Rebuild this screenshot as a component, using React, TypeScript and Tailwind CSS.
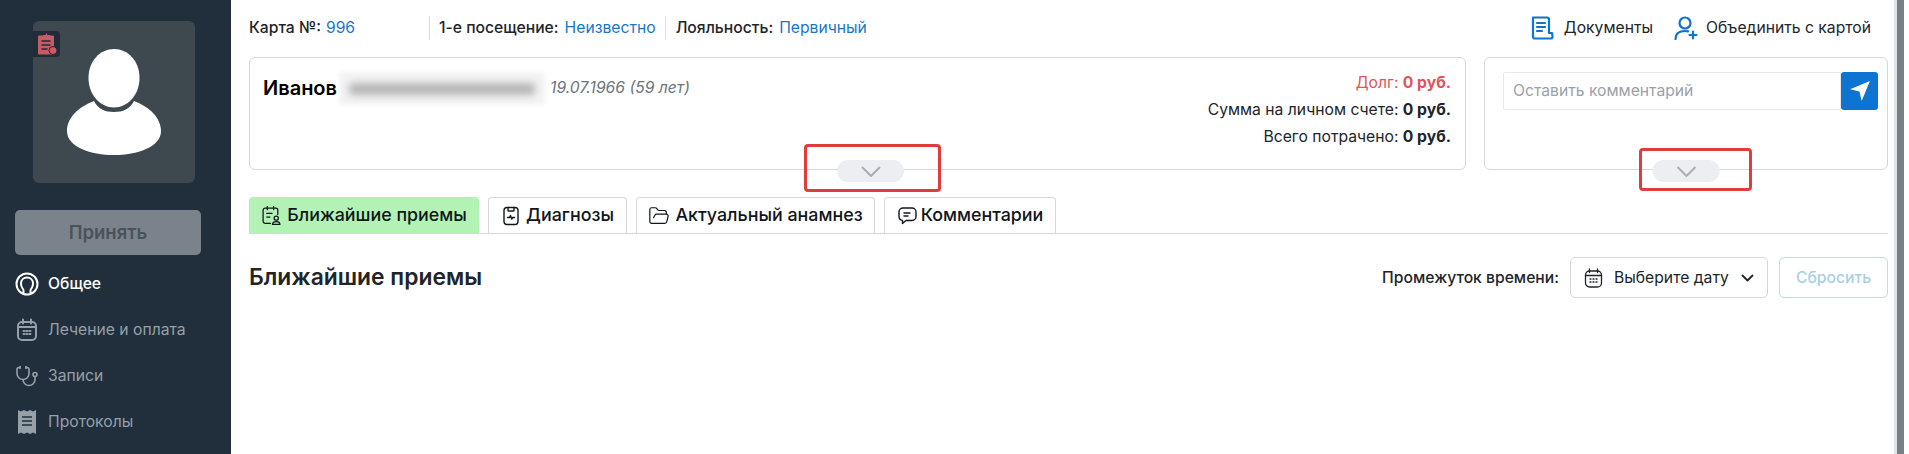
import { FolderOpen, Stethoscope } from 'lucide-react';

function AppointmentsIcon() {
  return (
    <svg width="21" height="21" viewBox="0 0 20 20" fill="none" stroke="currentColor" strokeWidth="1.200" strokeLinecap="round">
      <path d="M9 17.500H4a2 2 0 0 1-2-2V5a2 2 0 0 1 2-2h10a2 2 0 0 1 2 2v4" />
      <path d="M6 1.500v3M12 1.500v3M5.500 8h5M5.500 11.500h3" />
      <circle cx="14.500" cy="12.500" r="2" />
      <path d="M11 18.500c0-1.800 1.500-2.700 3.500-2.700s3.500.9 3.500 2.700z" />
    </svg>
  );
}

function DiagnosisIcon() {
  return (
    <svg width="20" height="20" viewBox="0 0 20 20" fill="none" stroke="currentColor" strokeWidth="1.400" strokeLinecap="round" strokeLinejoin="round">
      <rect x="3" y="1.500" width="14" height="17" rx="3" />
      <path d="M7 1.500v2.700c0 .5.400.8.800.8h4.400c.4 0 .8-.3.800-.8V1.500" />
      <path d="M6.500 11.500h2l1-2 1.200 3.500 1-1.500h1.800" />
    </svg>
  );
}

function CommentIcon() {
  return (
    <svg width="20" height="20" viewBox="0 0 20 20" fill="none" stroke="currentColor" strokeWidth="1.400" strokeLinecap="round" strokeLinejoin="round">
      <path d="M6 2h9a4 4 0 0 1 4 4v4.500a4 4 0 0 1-4 4H9l-3.500 3v-3.100A4 4 0 0 1 2 10.500V6a4 4 0 0 1 4-4z" />
      <path d="M7 7h6M7 10h4" />
    </svg>
  );
}

function AvatarFigure() {
  return (
    <svg width="94" height="106" viewBox="0 0 94 106" fill="white">
      <path d="M47 0c14 0 25.500 12 25.500 29 0 17-12 29.500-25.500 29.500S21.500 46 21.500 29C21.500 12 33 0 47 0z" />
      <path d="M27 52c4 8 11 11 20 11s16-3 20-11c16 6 27 17 27 30 0 16-24 24-47 24S0 98 0 82C0 69 11 58 27 52z" />
    </svg>
  );
}

function GeneralIcon() {
  return (
    <svg width="24" height="24" viewBox="0 0 24 24" fill="none" stroke="white" strokeWidth="2">
      <circle cx="12" cy="12" r="10.500" />
      <path d="M8.500 21v-2.500c0-1-.6-1.600-1.200-2.500C6.400 14.600 6 13 6 11.500 6 8 8.600 5.500 12 5.500s6 2.500 6 6c0 1.500-.4 3.100-1.300 4.500-.6.900-1.200 1.500-1.200 2.500V21" />
    </svg>
  );
}

function TreatmentIcon() {
  return (
    <svg width="24" height="24" viewBox="0 0 24 24" fill="none" stroke="#95a0a9" strokeWidth="2" strokeLinecap="round">
      <rect x="3" y="4" width="18" height="18" rx="4" />
      <path d="M8 1.500v4M16 1.500v4M3 9h18" />
      <path d="M8.500 13h1M11.500 13h1M14.500 13h1M8.500 16h1M11.500 16h1M14.500 16h1" />
    </svg>
  );
}

function ProtocolsIcon() {
  return (
    <svg width="20" height="24" viewBox="0 0 20 24" fill="#95a0a9">
      <path d="M1 0l3 1.500L7 0l3 1.500L13 0l3 1.500L19 0v24l-3-1.500-3 1.500-3-1.500L7 24l-3-1.500L1 24z" />
      <path d="M5 7h10M5 11h10M5 15h10" stroke="#212f3c" strokeWidth="1.500" />
    </svg>
  );
}

function RecordBadge() {
  return (
    <svg width="22" height="24" viewBox="0 0 22 24" fill="none">
      <path d="M7 3h2.500l1-2 1 2H14v2H7z" fill="#c95b64" />
      <rect x="2" y="3.500" width="16" height="19" rx="1" fill="#c95b64" />
      <path d="M5.500 9h9M5.500 13h9M5.500 17h6" stroke="#1f2c3a" strokeWidth="1.500" />
      <circle cx="17" cy="18.500" r="4" fill="#c95b64" stroke="#1f2c3a" strokeWidth="1" />
    </svg>
  );
}

function DocumentsIcon() {
  return (
    <svg width="24" height="24" viewBox="0 0 24 24" fill="none" stroke="#0d74d1" strokeWidth="2.200" strokeLinecap="round" strokeLinejoin="round">
      <path d="M19 17V3.500A2 2 0 0 0 17 1.500H3v19a2 2 0 0 0 2 2h16a2 2 0 0 0 1.500-2.500l-.5-3h-3" />
      <path d="M7 7h8M7 11h8M7 15h5" />
    </svg>
  );
}

function MergeIcon() {
  return (
    <svg width="24" height="24" viewBox="0 0 24 24" fill="none" stroke="#0d74d1" strokeWidth="2.200" strokeLinecap="round">
      <circle cx="11" cy="7" r="5.500" />
      <path d="M1.500 23c0-5 3.500-8 9.500-8 1 0 2 .1 3 .4" />
      <path d="M19 15.500v7M15.500 19h7" />
    </svg>
  );
}

function DotsCalendarIcon() {
  return (
    <svg width="19" height="20" viewBox="0 0 19 20" fill="none" stroke="currentColor" strokeWidth="1.300" strokeLinecap="round">
      <rect x="1.500" y="3" width="16" height="16" rx="4" />
      <path d="M5.500 1v3.500M13.500 1v3.500M1.500 7.500h16" />
      <path d="M6 11h1M9 11h1M12 11h1M6 14h1M9 14h1M12 14h1" />
    </svg>
  );
}

function SmallChevron() {
  return (
    <svg width="13" height="8" viewBox="0 0 13 8" fill="none" stroke="currentColor" strokeWidth="1.800" strokeLinecap="round" strokeLinejoin="round">
      <path d="M1.500 1.500l5 5 5-5" />
    </svg>
  );
}

function PillChevron() {
  return (
    <svg width="20" height="11" viewBox="0 0 20 11" fill="none" stroke="#a9adb3" strokeWidth="2">
      <path d="M1 1l9 9 9-9" />
    </svg>
  );
}

const menu = [
  { label: 'Лечение и оплата', icon: <TreatmentIcon /> },
  { label: 'Записи', icon: <Stethoscope size={25} color="#95a0a9" strokeWidth={1.600} /> },
  { label: 'Протоколы', icon: <ProtocolsIcon /> },
];

const tabs = [
  { label: 'Диагнозы', icon: <DiagnosisIcon />, width: 'w-[139px]', gap: 'gap-[5px]' },
  { label: 'Актуальный анамнез', icon: <FolderOpen size={22} strokeWidth={1.300} />, width: 'w-[239px]', gap: 'gap-[5px]' },
  { label: 'Комментарии', icon: <CommentIcon />, width: 'w-[172px]', gap: 'gap-[4px]' },
];

export default function App() {
  return (
    <div className="relative flex h-[454px] w-[1909px] overflow-hidden bg-white text-[15.700px] text-[#212529] font-['Inter',sans-serif]">
      <aside className="flex w-[231px] shrink-0 flex-col bg-[#212f3c] px-[15px] pt-[21px]">
        <div className="relative mx-[18px] flex h-[162px] w-[162px] items-end justify-center rounded-[6px] bg-[#3d484f] pb-[28px]">
          <div className="absolute left-0 top-[10px] flex h-[26px] w-[27px] items-center justify-center rounded-r-[4px] bg-[#1f2c3a]">
            <RecordBadge />
          </div>
          <AvatarFigure />
        </div>
        <div className="mt-[27px] flex h-[45px] w-[186px] items-center justify-center rounded-[5px] bg-[#7a838b] text-[18.500px] font-semibold text-[#4a5259]">
          Принять
        </div>
        <nav className="mt-[15px] flex flex-col gap-[18px]">
          <div className="flex h-[28px] items-center gap-[9px] font-medium text-white">
            <span className="flex w-[24px] justify-center"><GeneralIcon /></span>
            Общее
          </div>
          {menu.map((item) => (
            <div key={item.label} className="flex h-[28px] items-center gap-[9px] text-[#95a0a9]">
              <span className="flex w-[24px] justify-center">{item.icon}</span>
              {item.label}
            </div>
          ))}
        </nav>
      </aside>

      <main className="flex min-w-0 flex-1 flex-col pl-[18px] pr-[6px]">
        <header className="flex h-[57px] shrink-0 items-center justify-between pb-[1px]">
          <div className="flex items-center">
            <div className="flex h-[24px] w-[181px] items-center border-r border-[#d5dbe0] font-medium">
              Карта №:<span className="ml-[5px] font-normal text-[#1976c9]">996</span>
            </div>
            <div className="flex h-[24px] items-center border-r border-[#dee2e6] pl-[9px] pr-[9px] font-medium">
              1-е посещение:<span className="ml-[6px] font-normal text-[#1976c9]">Неизвестно</span>
            </div>
            <div className="flex items-center pl-[10px] font-medium">
              Лояльность:<span className="ml-[6px] font-normal text-[#1976c9]">Первичный</span>
            </div>
          </div>
          <div className="flex items-center pr-[17px]">
            <DocumentsIcon />
            <span className="ml-[10px]">Документы</span>
            <span className="ml-[21px]"><MergeIcon /></span>
            <span className="ml-[8px]">Объединить с картой</span>
          </div>
        </header>

        <div className="flex h-[113px] shrink-0 gap-[18px]">
          <section className="relative flex flex-1 justify-between rounded-[6px] border border-[#d5d7da] pl-[13px] pr-[14px] pt-[14px]">
            <div className="mt-[4px] flex h-[24px] items-center">
              <span className="text-[20px] font-semibold text-black">Иванов</span>
              <span className="ml-[2px] h-[33px] w-[206px] bg-[#f3f3f3] blur-[2px]">
                <span className="mx-[10px] mt-[11px] block h-[12px] rounded bg-[#b5b5b5] blur-[3px]" />
              </span>
              <span className="ml-[5px] italic text-[#6c757d]">19.07.1966 (59 лет)</span>
            </div>
            <div className="flex flex-col items-end gap-[6px] leading-[21px]">
              <div className="text-[#e0555a]">Долг: <b className="font-bold">0 руб.</b></div>
              <div>Сумма на личном счете: <b className="font-bold">0 руб.</b></div>
              <div>Всего потрачено: <b className="font-bold">0 руб.</b></div>
            </div>
            <div className="absolute left-[587px] bottom-[-13px] flex h-[22px] w-[67px] items-center justify-center rounded-full bg-[#eceef1]">
              <PillChevron />
            </div>
          </section>

          <section className="relative w-[404px] shrink-0 rounded-[6px] border border-[#d5d7da] pl-[18px] pr-[9px] pt-[14px]">
            <div className="flex h-[38px]">
              <div className="flex flex-1 items-center rounded-l-[2px] border border-[#e6e8ea] pl-[9px] text-[#9aa1a8]">
                Оставить комментарий
              </div>
              <div className="flex w-[37px] items-center justify-center rounded-[3px] bg-[#0d74d1]">
                <svg width="22" height="22" viewBox="0 0 20 20" fill="white">
                  <path d="M1 8.500 19 1 11.500 19 9.500 10.500z" />
                </svg>
              </div>
            </div>
            <div className="absolute left-1/2 -translate-x-1/2 bottom-[-13px] flex h-[22px] w-[67px] items-center justify-center rounded-full bg-[#eceef1]">
              <PillChevron />
            </div>
          </section>
        </div>

        <div className="mt-[27px] flex h-[37px] shrink-0 gap-[9px] border-b border-[#d5d7da] text-[17.850px] font-medium text-[#10161b]">
          <div className="flex h-[36px] w-[230px] items-center justify-center gap-[5px] rounded-t-[4px] bg-[#b2f2b4]">
            <AppointmentsIcon />
            Ближайшие приемы
          </div>
          {tabs.map((tab) => (
            <div key={tab.label} className={`flex h-[36px] items-center justify-center rounded-t-[4px] border border-b-0 border-[#d5d7da] ${tab.width} ${tab.gap}`}>
              {tab.icon}
              {tab.label}
            </div>
          ))}
        </div>

        <div className="mt-[23px] flex items-center justify-between">
          <h2 className="text-[22.850px] font-semibold text-[#212529]">Ближайшие приемы</h2>
          <div className="flex items-center">
            <span className="font-medium">Промежуток времени:</span>
            <div className="ml-[11px] flex h-[41px] w-[198px] items-center rounded-[5px] border border-[#d5d7da] pl-[13px]">
              <DotsCalendarIcon />
              <span className="ml-[11px]">Выберите дату</span>
              <span className="ml-[12px]"><SmallChevron /></span>
            </div>
            <div className="ml-[11px] flex h-[41px] w-[109px] items-center justify-center rounded-[5px] border border-[#bcdcef] font-medium text-[#a9cfe8]">
              Сбросить
            </div>
          </div>
        </div>
      </main>

      <div className="flex w-[15px] shrink-0">
        <div className="w-[3px] bg-[#e0e3e6]" />
        <div className="w-[7px] bg-[#7b8085]" />
      </div>

      <div className="absolute left-[804px] top-[144px] h-[48px] w-[137px] rounded-[4px] border-[3px] border-[#e03c3c]" />
      <div className="absolute left-[1639px] top-[148px] h-[43px] w-[113px] rounded-[4px] border-[3px] border-[#e03c3c]" />
    </div>
  );
}
